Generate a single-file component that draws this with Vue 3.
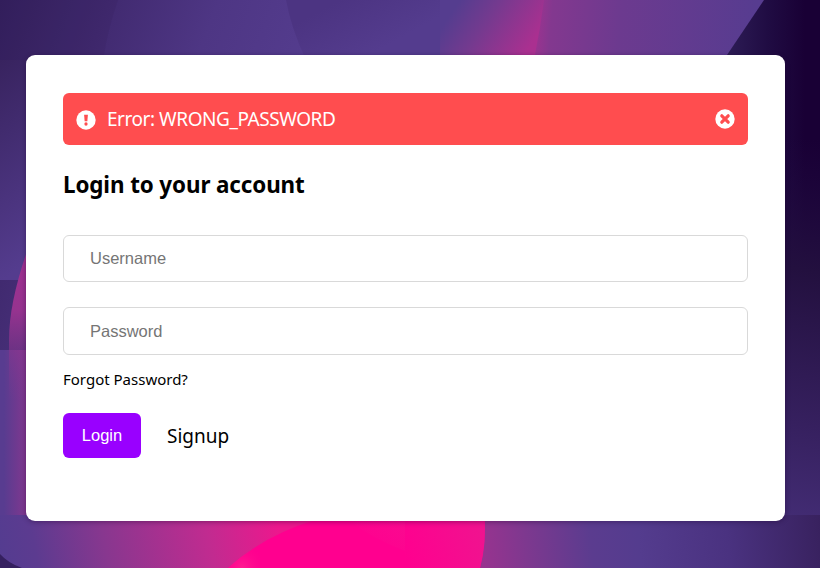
<script setup>
import { ref } from 'vue'

const username = ref('')
const password = ref('')
const error = ref('Error: WRONG_PASSWORD')
</script>

<template>
  <main class="page">
    <svg class="backdrop" viewBox="0 0 820 568" preserveAspectRatio="none" aria-hidden="true">
      <defs>
        <linearGradient id="base" gradientUnits="userSpaceOnUse" x1="0" y1="0" x2="290" y2="110">
          <stop offset="0" stop-color="#34205e" />
          <stop offset=".33" stop-color="#412a70" />
          <stop offset=".66" stop-color="#4e3684" />
          <stop offset="1" stop-color="#543c8e" />
        </linearGradient>
        <linearGradient id="leftFade" x1="0" y1="0" x2="0.1" y2="1">
          <stop offset="0" stop-color="#38235f" />
          <stop offset="1" stop-color="#543c8e" />
        </linearGradient>
        <linearGradient id="sheen" gradientUnits="userSpaceOnUse" x1="340" y1="0" x2="370" y2="55">
          <stop offset="0" stop-color="#4c3482" />
          <stop offset="1" stop-color="#543c8e" />
        </linearGradient>
        <linearGradient id="topPink" gradientUnits="userSpaceOnUse" x1="460" y1="0" x2="530" y2="46">
          <stop offset="0" stop-color="#553d8f" />
          <stop offset=".4" stop-color="#743a8f" />
          <stop offset="1" stop-color="#aa3090" />
        </linearGradient>
        <linearGradient id="topRight" gradientUnits="userSpaceOnUse" x1="533" y1="0" x2="755" y2="18">
          <stop offset="0" stop-color="#a43190" />
          <stop offset=".09" stop-color="#83388f" />
          <stop offset=".4" stop-color="#6c3a8f" />
          <stop offset="1" stop-color="#573c90" />
        </linearGradient>
        <linearGradient id="darkX" gradientUnits="userSpaceOnUse" x1="730" y1="0" x2="805" y2="0">
          <stop offset="0" stop-color="#2c1b54" />
          <stop offset=".5" stop-color="#200c43" />
          <stop offset="1" stop-color="#190035" />
        </linearGradient>
        <linearGradient id="darkY" gradientUnits="userSpaceOnUse" x1="820" y1="140" x2="740" y2="568">
          <stop offset="0" stop-color="#200a42" stop-opacity="0" />
          <stop offset=".3" stop-color="#23103f" />
          <stop offset=".65" stop-color="#36205f" />
          <stop offset="1" stop-color="#4a3380" />
        </linearGradient>
        <linearGradient id="bottom" gradientUnits="userSpaceOnUse" x1="0" y1="560" x2="275" y2="510">
          <stop offset="0" stop-color="#543c90" />
          <stop offset=".13" stop-color="#5c3b90" />
          <stop offset=".38" stop-color="#88378f" />
          <stop offset=".75" stop-color="#c12b90" />
          <stop offset="1" stop-color="#ec188d" />
        </linearGradient>
        <linearGradient id="leftPink" gradientUnits="userSpaceOnUse" x1="4" y1="0" x2="27" y2="0">
          <stop offset="0" stop-color="#583c90" />
          <stop offset="1" stop-color="#82378f" />
        </linearGradient>
        <linearGradient id="leftTip" gradientUnits="userSpaceOnUse" x1="20" y1="250" x2="20" y2="400">
          <stop offset="0" stop-color="#a02f8f" />
          <stop offset=".4" stop-color="#96338f" />
          <stop offset="1" stop-color="#80378f" stop-opacity="0" />
        </linearGradient>
        <linearGradient id="bottomRight" gradientUnits="userSpaceOnUse" x1="480" y1="535" x2="820" y2="500">
          <stop offset="0" stop-color="#98338f" />
          <stop offset=".13" stop-color="#7e388f" />
          <stop offset=".32" stop-color="#5b3c8f" />
          <stop offset=".46" stop-color="#543c8e" />
          <stop offset=".72" stop-color="#4a3280" />
          <stop offset="1" stop-color="#38215e" />
        </linearGradient>
        <linearGradient id="hot" gradientUnits="userSpaceOnUse" x1="385" y1="560" x2="420" y2="510">
          <stop offset="0" stop-color="#ff008f" />
          <stop offset="1" stop-color="#f80e90" />
        </linearGradient>
        <linearGradient id="hotRight" gradientUnits="userSpaceOnUse" x1="405" y1="560" x2="485" y2="535">
          <stop offset="0" stop-color="#ff008f" />
          <stop offset="1" stop-color="#f0138f" />
        </linearGradient>
        <radialGradient id="hotGlow" gradientUnits="userSpaceOnUse" cx="242" cy="568" r="25">
          <stop offset="0" stop-color="#ff1c91" />
          <stop offset="1" stop-color="#ff008f" stop-opacity="0" />
        </radialGradient>
      </defs>
      <rect width="820" height="568" fill="url(#base)" />
      <rect y="60" width="30" height="220" fill="url(#leftFade)" />
      <path d="M0 0H118Q108 28 103 60H0Z" fill="#250f45" opacity=".1" />
      <path d="M286 0H465V60H306Q291 28 286 0Z" fill="url(#sheen)" />
      <path d="M440 0H555L534 60H440Z" fill="url(#topPink)" />
      <path d="M554 0H780V60H534Q540 30 544 0Z" fill="url(#topRight)" />
      <path d="M764 0H820V568H727V55Z" fill="url(#darkX)" />
      <path d="M770 140H820V568H740Z" fill="url(#darkY)" />
      <path d="M0 350H30V568H0Z" fill="url(#leftPink)" />
      <path d="M30 243Q9 300 9 340V410H30Z" fill="url(#leftTip)" />
      <path d="M0 515H500V568H0Z" fill="url(#bottom)" />
      <path d="M470 515H820V568H470Z" fill="url(#bottomRight)" />
      <path d="M228 568Q263 536 315 520L340 505H484Q487 539 480 568Z" fill="#ff008f" />
      <path d="M348 520H405V551Q371 538 348 520Z" fill="url(#hot)" />
      <path d="M405 515H484Q487 542 480 568H405Z" fill="url(#hotRight)" />
      <path d="M228 568Q242 555 260 544V568Z" fill="url(#hotGlow)" />
      <path d="M0 554Q8 563 22 568H0Z" fill="#35205f" />
    </svg>

    <section class="card">
      <div v-if="error" class="alert" role="alert">
        <svg class="icon alert-icon" viewBox="0 0 20 20" aria-hidden="true">
          <circle cx="10" cy="10" r="9.7" fill="#fff" />
          <path d="M8.1 4.8h3.8l-.55 6.5h-2.7Z" fill="#ff4d4f" />
          <circle cx="10" cy="14" r="1.65" fill="#ff4d4f" />
        </svg>
        <span class="alert-text">{{ error }}</span>
        <button class="dismiss" type="button" @click="error = ''">
          <svg class="icon" viewBox="0 0 20 20" aria-hidden="true">
            <circle cx="10" cy="10" r="9.7" fill="#fff" />
            <path d="m6.8 6.8 6.4 6.4m0-6.4-6.4 6.4" stroke="#ff4d4f" stroke-width="3.2" stroke-linecap="round" />
          </svg>
        </button>
      </div>
      <h1 class="title"><span>Login to your account</span></h1>
      <form class="form" @submit.prevent>
        <input v-model="username" class="field" type="text" placeholder="Username" />
        <input v-model="password" class="field field-password" type="password" placeholder="Password" />
        <a class="forgot">Forgot Password?</a>
        <div class="actions">
          <button class="login" type="submit">Login</button>
          <a class="signup">Signup</a>
        </div>
      </form>
    </section>
  </main>
</template>

<style>
body {
  overflow: hidden;
}
</style>

<style scoped>
.page {
  position: relative;
  box-sizing: border-box;
  width: 820px;
  height: 568px;
  padding: 55px 35px 47px 26px;
  overflow: hidden;
  font-family: "Noto Sans", "Open Sans", sans-serif;
  color: #000;
}
.backdrop {
  position: absolute;
  inset: 0;
  width: 100%;
  height: 100%;
}
.card {
  position: relative;
  box-sizing: border-box;
  height: 466px;
  padding: 38px 37px;
  border-radius: 9px;
  background: #fff;
  box-shadow: 0 1px 5px rgba(30, 0, 50, 0.4);
}
.alert {
  display: flex;
  align-items: center;
  box-sizing: border-box;
  height: 52px;
  padding: 0 13px;
  border-radius: 6px;
  background: #ff4d4f;
  color: #fff;
}
.icon {
  display: block;
  width: 20px;
  height: 20px;
  fill: none;
}
.alert-icon {
  margin-top: 1px;
}
.alert-text {
  flex: 1;
  margin-left: 11px;
  font-size: 19px;
  line-height: 26px;
  letter-spacing: -0.45px;
  white-space: nowrap;
}
.dismiss {
  padding: 0;
  border: 0;
  background: none;
}
.title {
  margin: 24px 0 0;
  font-size: 22.4px;
  line-height: 32px;
  font-weight: 700;
  letter-spacing: -0.1px;
}
.form {
  display: flex;
  flex-direction: column;
  align-items: flex-start;
  margin-top: 34px;
}
.field {
  box-sizing: border-box;
  width: 100%;
  height: 47px;
  padding: 0 26px;
  border: 1px solid #d9d9d9;
  border-radius: 6px;
  background: #fff;
  font: 16.5px "Liberation Sans", Arial, sans-serif;
  outline: none;
}
.field::placeholder {
  color: #757575;
  opacity: 1;
}
.field-password {
  height: 48px;
  margin-top: 25px;
}
.forgot {
  margin-top: 14px;
  font-size: 15px;
  line-height: 20px;
}
.actions {
  display: flex;
  align-items: center;
  gap: 26px;
  margin-top: 24px;
}
.login {
  width: 78px;
  height: 45px;
  padding: 0;
  border: 0;
  border-radius: 6px;
  background: #9900ff;
  color: #fff;
  font: 16.5px "Liberation Sans", Arial, sans-serif;
}
.signup {
  font-size: 19px;
  line-height: 26px;
}
</style>
